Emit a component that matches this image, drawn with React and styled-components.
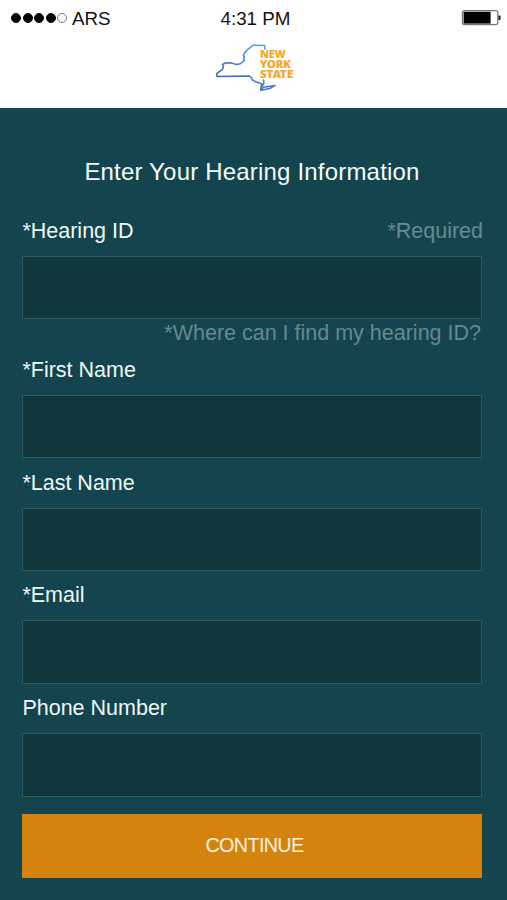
import React from "react";
import styled, { createGlobalStyle } from "styled-components";

const GlobalStyle = createGlobalStyle`
    * {
        box-sizing: border-box;
    }
    body {
        margin: 0;
        background-color: #14454e;
        font-family: "Liberation Sans", Arial, Helvetica, sans-serif;
    }
`;

const Screen = styled.div`
    width: 507px;
    height: 900px;
    overflow: hidden;
    display: flex;
    flex-direction: column;
    background-color: #14454e;
`;

const Header = styled.header`
    height: 107.5px;
    flex-shrink: 0;
    background-color: white;
    display: flex;
    flex-direction: column;
`;

const StatusBar = styled.div`
    height: 38px;
    padding: 0 6px 1px 11px;
    display: grid;
    grid-template-columns: 1fr auto 1fr;
    align-items: center;
    font-size: 18.8px;
    line-height: 24px;
    color: #111;
`;

const Carrier = styled.div`
    display: flex;
    align-items: center;
    gap: 5px;
`;

const Signal = styled.div`
    display: flex;
    gap: 1.5px;
    margin-bottom: 1px;
`;

const Dot = styled.span`
    width: 10px;
    height: 10px;
    border-radius: 50%;
    border: 1px solid ${props => (props.$filled ? "black" : "#777")};
    background-color: ${props => (props.$filled ? "black" : "white")};
`;

const Clock = styled.span`
    margin-right: 1px;
`;

const BatteryIcon = styled.svg`
    justify-self: end;
    display: block;
    margin-bottom: 1px;
`;

const LogoIcon = styled.svg`
    display: block;
    margin-left: 214px;
    margin-top: 4px;
`;

const Form = styled.form`
    flex-grow: 1;
    display: flex;
    flex-direction: column;
    padding: 48px 25px 0 22px;
`;

const Title = styled.h1`
    margin: 0 0 19px;
    font-size: 24px;
    line-height: 32px;
    font-weight: normal;
    letter-spacing: 0.19px;
    text-align: center;
    color: #f4fbfb;
`;

const Field = styled.div`
    display: flex;
    flex-direction: column;
`;

const LabelRow = styled.div`
    height: 49.25px;
    padding-top: 11.4px;
    margin-right: -1px;
    display: flex;
    justify-content: space-between;
    font-size: 21.5px;
    line-height: 26px;
`;

const Label = styled.label`
    padding-left: 0.4px;
    color: #eef8f9;
`;

const Muted = styled.span`
    color: #64898f;
`;

const Input = styled.input`
    width: 100%;
    height: 63.5px;
    padding: 0 14px;
    border: 1.5px solid #2f5a5f;
    border-radius: 0;
    outline: none;
    background-color: #0f373c;
    color: white;
    font: inherit;
    font-size: 21.5px;
`;

const Hint = styled.div`
    height: 26.3px;
    padding-right: 1px;
    text-align: right;
    font-size: 21.5px;
    line-height: 29px;
    white-space: nowrap;
    color: #64898f;
`;

const Button = styled.button`
    width: 100%;
    height: 64px;
    margin-top: 17.6px;
    padding: 0 0 1px 5px;
    border: none;
    background-color: #d4830f;
    color: #fff4e0;
    font: inherit;
    font-size: 19.8px;
    letter-spacing: -0.65px;
`;

const Battery = () => (
    <BatteryIcon width="40" height="18" viewBox="0 0 40 18">
        <rect x="1.4" y="1.6" width="35.4" height="14" rx="2" fill="white" stroke="#777" strokeWidth="1.2" />
        <rect x="2.6" y="2.8" width="27" height="11.8" fill="black" />
        <path d="M37.4 6.4h1.2a1 1 0 0 1 1 1v2.6a1 1 0 0 1-1 1h-1.2z" fill="#222" />
    </BatteryIcon>
);

const Logo = () => (
    <LogoIcon width="84" height="54" viewBox="214 42 84 54">
        <defs>
            <linearGradient id="outline" x1="0" y1="1" x2="1" y2="0">
                <stop offset="0" stopColor="#4255a8" />
                <stop offset="0.45" stopColor="#3f79c4" />
                <stop offset="1" stopColor="#48b4e8" />
            </linearGradient>
        </defs>
        <path
            d="M265 49.3 L264.7 45.4 L253 45.3 L248.4 48.8 L244.2 53.2 L243.4 55.6 L244.6 57 L243.8 58.6 L244.3 60.4 L240.4 63.7 L236 64.4 L230.4 62.7 L225.4 63 L222.6 64.5 L223.4 66.8 L222.5 69.4 L216.9 73.4 L217 76.4 L249.5 76 L251.4 77.6 L252.2 79.8 L255.6 81.7 L261.6 83.6 L260.6 90 L263.4 87.2 L275.2 85.4 L269.6 88.6 L260.8 90.2 M262 86.4 L264 82.8 L263.5 80"
            fill="none"
            stroke="url(#outline)"
            strokeWidth="1.5"
            strokeLinejoin="round"
            strokeLinecap="round"
        />
        <g fill="#f6a61f" stroke="#f6a61f" strokeWidth="0.2" fontFamily="'Noto Sans', sans-serif" fontWeight="800" fontSize="11">
            <text x="260" y="58.4" textLength="25.5" lengthAdjust="spacingAndGlyphs">NEW</text>
            <text x="260" y="68.3" textLength="30.7" lengthAdjust="spacingAndGlyphs">YORK</text>
            <text x="260" y="78.2" textLength="33.5" lengthAdjust="spacingAndGlyphs">STATE</text>
        </g>
    </LogoIcon>
);

const fields = [
    { name: "firstName", label: "*First Name" },
    { name: "lastName", label: "*Last Name" },
    { name: "email", label: "*Email" },
    { name: "phone", label: "Phone Number" },
];

export default function App() {
    return (
        <Screen>
            <GlobalStyle />
            <Header>
                <StatusBar>
                    <Carrier>
                        <Signal>
                            {[1, 2, 3, 4, 5].map(n => (
                                <Dot key={n} $filled={n < 5} />
                            ))}
                        </Signal>
                        ARS
                    </Carrier>
                    <Clock>4:31 PM</Clock>
                    <Battery />
                </StatusBar>
                <Logo />
            </Header>
            <Form>
                <Title>Enter Your Hearing Information</Title>
                <Field>
                    <LabelRow>
                        <Label htmlFor="hearingId">*Hearing ID</Label>
                        <Muted>*Required</Muted>
                    </LabelRow>
                    <Input id="hearingId" />
                    <Hint>*Where can I find my hearing ID?</Hint>
                </Field>
                {fields.map(field => (
                    <Field key={field.name}>
                        <LabelRow>
                            <Label htmlFor={field.name}>{field.label}</Label>
                        </LabelRow>
                        <Input id={field.name} />
                    </Field>
                ))}
                <Button type="button">CONTINUE</Button>
            </Form>
        </Screen>
    );
}
